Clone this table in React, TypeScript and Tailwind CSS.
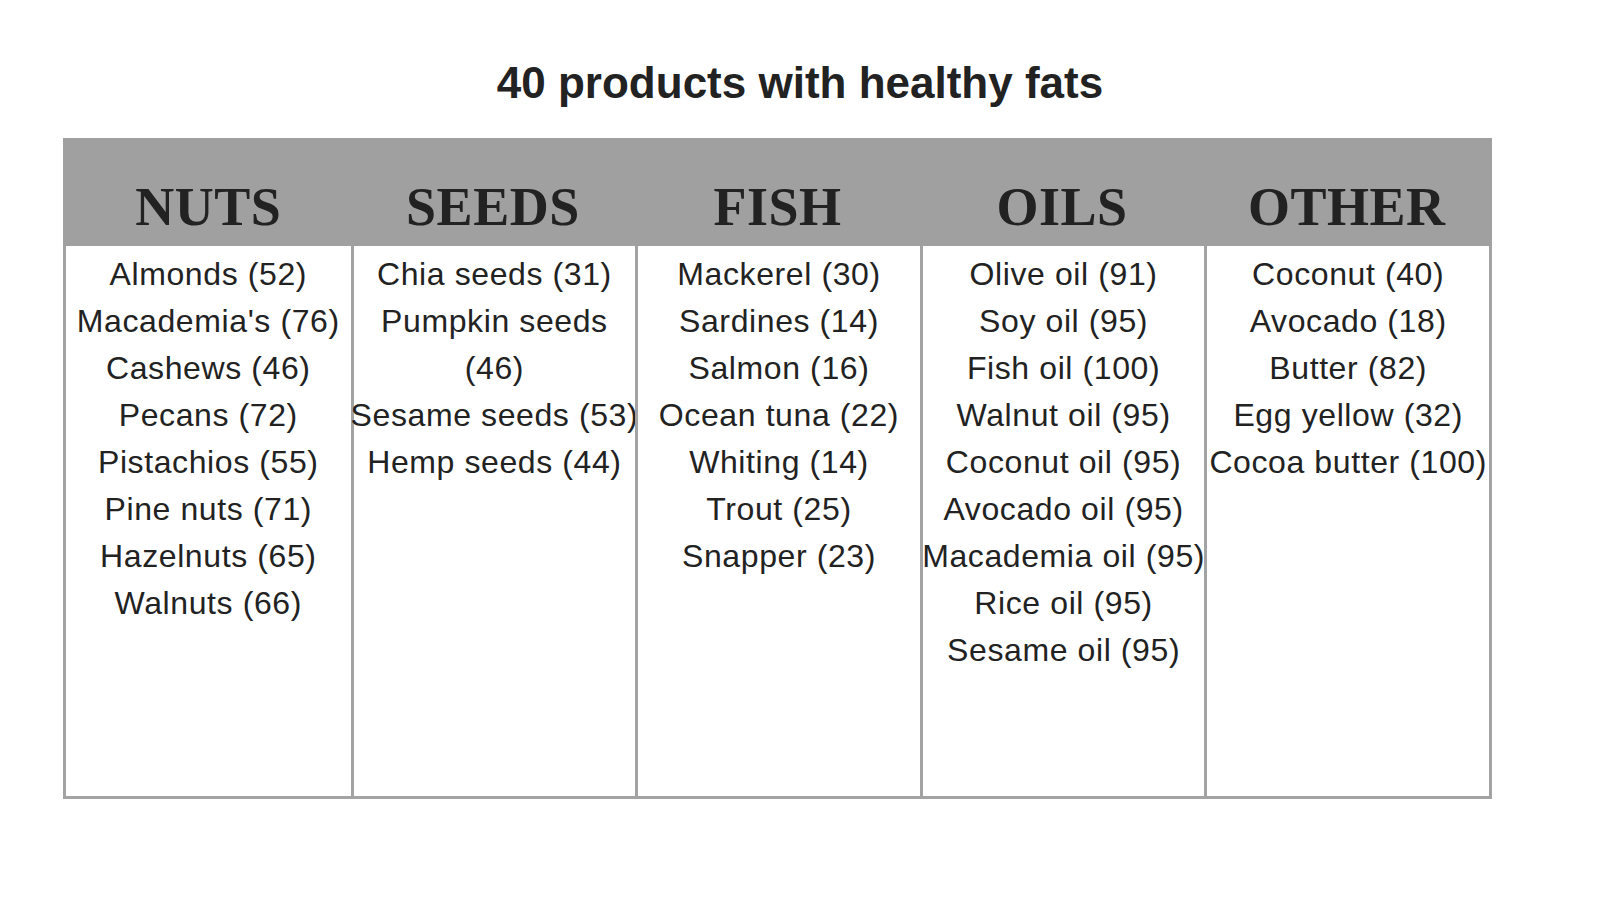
import React from 'react';

interface Column {
  title: string;
  items: string[];
}

const columns: Column[] = [
  {
    title: 'NUTS',
    items: [
      'Almonds (52)',
      "Macademia's (76)",
      'Cashews (46)',
      'Pecans (72)',
      'Pistachios (55)',
      'Pine nuts (71)',
      'Hazelnuts (65)',
      'Walnuts (66)',
    ],
  },
  {
    title: 'SEEDS',
    items: ['Chia seeds (31)', 'Pumpkin seeds\n(46)', 'Sesame seeds (53)', 'Hemp seeds (44)'],
  },
  {
    title: 'FISH',
    items: [
      'Mackerel (30)',
      'Sardines (14)',
      'Salmon (16)',
      'Ocean tuna (22)',
      'Whiting (14)',
      'Trout (25)',
      'Snapper (23)',
    ],
  },
  {
    title: 'OILS',
    items: [
      'Olive oil (91)',
      'Soy oil (95)',
      'Fish oil (100)',
      'Walnut oil (95)',
      'Coconut oil (95)',
      'Avocado oil (95)',
      'Macademia oil (95)',
      'Rice oil (95)',
      'Sesame oil (95)',
    ],
  },
  {
    title: 'OTHER',
    items: ['Coconut (40)', 'Avocado (18)', 'Butter (82)', 'Egg yellow (32)', 'Cocoa butter (100)'],
  },
];

export default function App() {
  return (
    <div className="w-[1600px] h-[900px] bg-white pt-[61px] text-[#222] font-['Liberation_Sans',Arial,sans-serif]">
      <h1 className="text-center text-[44px] font-bold leading-none h-[44px]">
        40 products with healthy fats
      </h1>

      <div className="ml-[63px] mt-[33px] w-[1429px]">
        {/* header band */}
        <div className="grid grid-cols-5 h-[108px] bg-[#a0a0a0] pt-[42px] px-[3px]">
          {columns.map((col) => (
            <div
              key={col.title}
              className="text-center text-[54px] leading-none font-bold tracking-[0.5px] font-['Liberation_Serif','Times_New_Roman',serif]"
            >
              {col.title}
            </div>
          ))}
        </div>

        {/* body */}
        <div className="grid grid-cols-5 h-[553px] border-[3px] border-t-0 border-[#a3a3a3]">
          {columns.map((col, i) => (
            <div
              key={col.title}
              className={`flex flex-col items-center pt-[5px] text-[32px] leading-[47px] tracking-[0.6px] ${
                i > 0 ? 'border-l-[3px] border-[#a3a3a3]' : ''
              }`}
            >
              {col.items.map((item) => (
                <div key={item} className="whitespace-pre text-center">
                  {item}
                </div>
              ))}
            </div>
          ))}
        </div>
      </div>
    </div>
  );
}
